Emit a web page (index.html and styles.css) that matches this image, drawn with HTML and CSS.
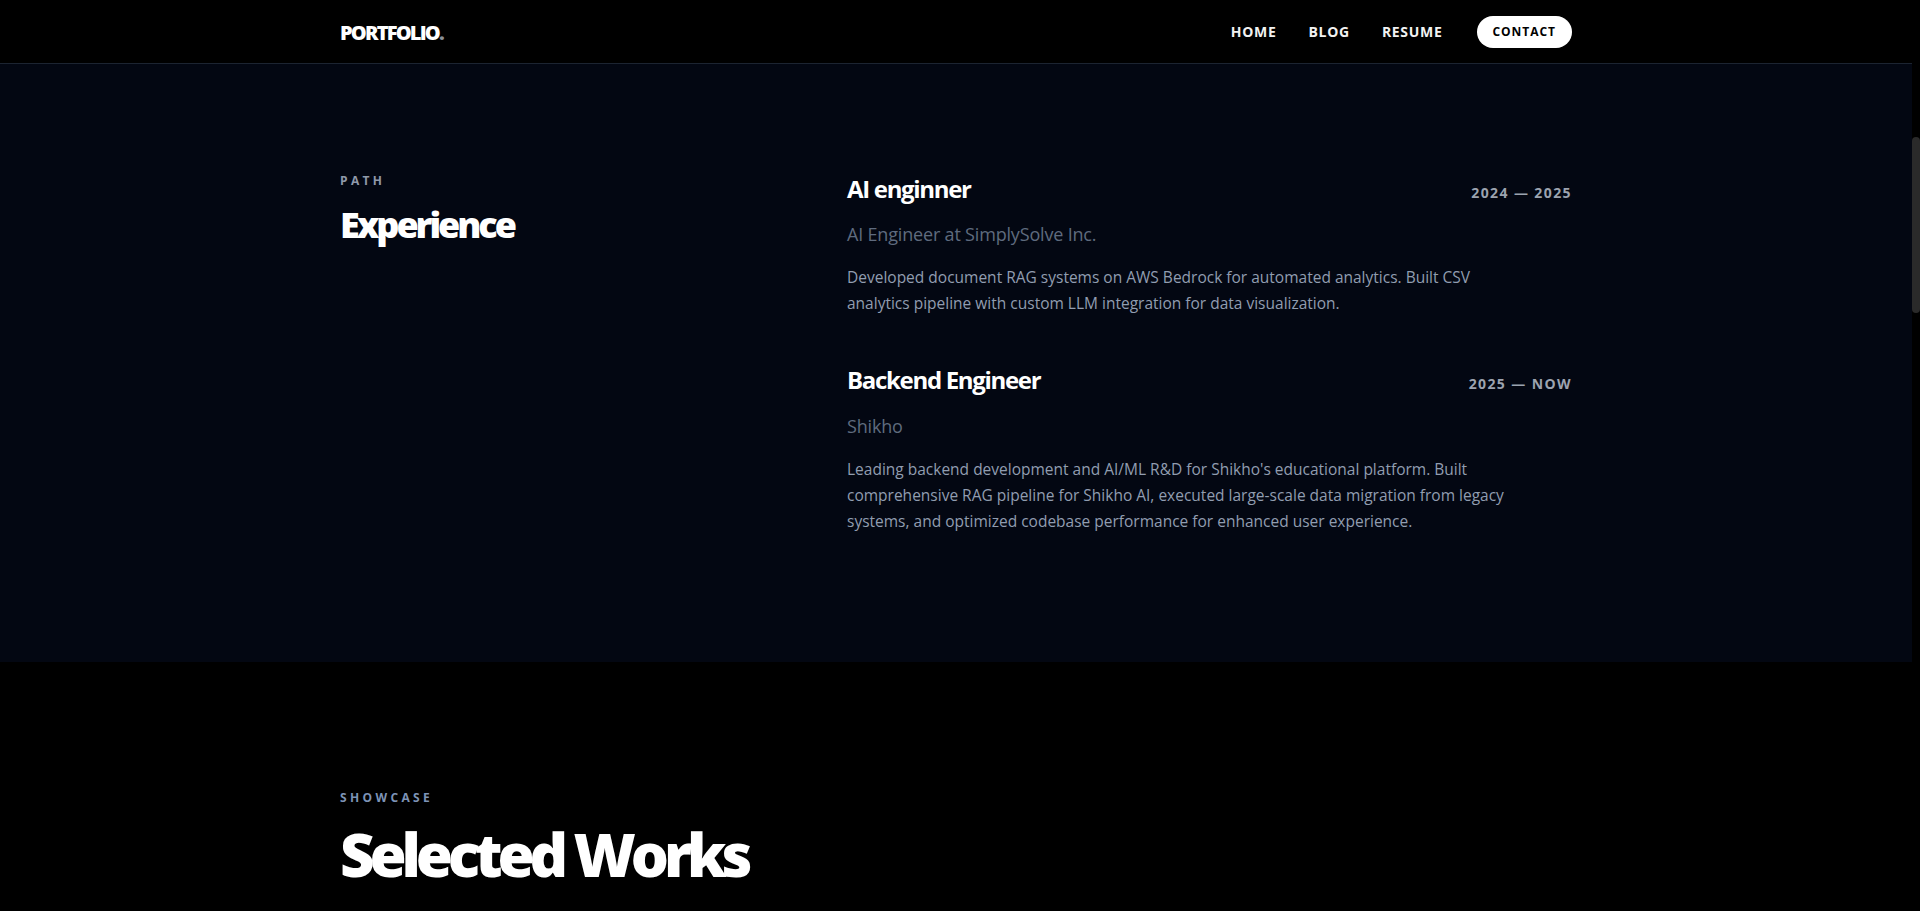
FILE: index.html
```html
<!DOCTYPE html>
<html lang="en">
<head>
<meta charset="utf-8">
<title>Portfolio</title>
<link rel="stylesheet" href="styles.css">
</head>
<body>
<header class="site-header">
  <div class="container header-inner">
    <a class="logo" href="#">PORTFOLIO<span class="logo-dot">.</span></a>
    <nav class="nav">
      <a class="nav-link" href="#">HOME</a>
      <a class="nav-link" href="#">BLOG</a>
      <a class="nav-link" href="#">RESUME</a>
      <a class="nav-cta" href="#">CONTACT</a>
    </nav>
  </div>
</header>
<main>
  <section class="experience">
    <div class="container exp-grid">
      <div class="exp-heading">
        <p class="eyebrow">PATH</p>
        <h2 class="section-title">Experience</h2>
      </div>
      <div class="exp-list">
        <article class="job">
          <div class="job-head">
            <h3 class="job-title">AI enginner</h3>
            <span class="job-date">2024 — 2025</span>
          </div>
          <p class="job-company">AI Engineer at SimplySolve Inc.</p>
          <p class="job-desc">Developed document RAG systems on AWS Bedrock for automated analytics. Built CSV analytics pipeline with custom LLM integration for data visualization.</p>
        </article>
        <article class="job">
          <div class="job-head">
            <h3 class="job-title">Backend Engineer</h3>
            <span class="job-date">2025 — NOW</span>
          </div>
          <p class="job-company">Shikho</p>
          <p class="job-desc">Leading backend development and AI/ML R&amp;D for Shikho's educational platform. Built comprehensive RAG pipeline for Shikho AI, executed large-scale data migration from legacy systems, and optimized codebase performance for enhanced user experience.</p>
        </article>
      </div>
    </div>
  </section>
  <section class="works">
    <div class="container">
      <p class="eyebrow eyebrow-blue">SHOWCASE</p>
      <h2 class="works-title">Selected Works</h2>
    </div>
  </section>
</main>
<div class="scroll-thumb" aria-hidden="true"></div>
</body>
</html>
```
FILE: styles.css
```css
* { box-sizing: border-box; }

html { background: #000; }

html::-webkit-scrollbar { width: 8px; }
html::-webkit-scrollbar-track { background: #000; }
html::-webkit-scrollbar-thumb { background: #2b2b2b; border-radius: 4px; }

body {
  margin: 0;
  padding-right: 8px;
  background: #000;
  color: #fff;
  font-family: "Open Sans", "Noto Sans", sans-serif;
}

a { color: inherit; text-decoration: none; }
p, h2, h3 { margin: 0; }

.container {
  max-width: 1280px;
  margin: 0 auto;
  padding: 0 24px;
}

/* scrollbar thumb drawn over the right edge */
.scroll-thumb {
  position: fixed;
  top: 137px;
  right: 0;
  width: 8px;
  height: 176px;
  border-radius: 4px;
  background: #2a2a2a;
  z-index: 20;
}

/* header */
.site-header {
  position: sticky;
  top: 0;
  z-index: 10;
  background: #000;
  border-bottom: 1px solid #1c2431;
}
.header-inner {
  height: 63px;
  display: flex;
  align-items: center;
  justify-content: space-between;
}
.logo {
  font-size: 20px;
  font-weight: 800;
  letter-spacing: -0.09em;
  line-height: 28px;
  color: #fff;
  margin-top: 2px;
}
.logo-dot { color: #8b8f98; }

.nav {
  display: flex;
  align-items: center;
  gap: 32px;
}
.nav-link {
  font-size: 14px;
  font-weight: 700;
  letter-spacing: 0.05em;
  line-height: 20px;
  color: #f2f2f2;
}
.nav-cta {
  background: #fff;
  color: #000;
  border-radius: 9999px;
  padding: 8px 16px;
  font-size: 12px;
  font-weight: 700;
  letter-spacing: 0.08em;
  line-height: 16px;
  margin-left: 2px;
}

/* experience */
.experience {
  background: #030712;
  padding: 109px 0 128px;
}
.exp-grid {
  display: grid;
  grid-template-columns: 443px 1fr;
  column-gap: 64px;
}
.exp-list { margin-top: -2px; }
.eyebrow {
  font-size: 12px;
  font-weight: 700;
  letter-spacing: 0.28em;
  line-height: 16px;
  color: #8f99aa;
}
.eyebrow-blue { color: #7d93b6; }

.section-title {
  margin-top: 16px;
  font-size: 36px;
  font-weight: 800;
  line-height: 40px;
  letter-spacing: -0.085em;
  color: #fff;
}

.job + .job { margin-top: 46px; }
.job-head {
  display: flex;
  justify-content: space-between;
  align-items: baseline;
}
.job-title {
  font-size: 24px;
  font-weight: 700;
  line-height: 36px;
  letter-spacing: -0.055em;
  color: #fff;
}
.job-date {
  font-size: 14px;
  font-weight: 700;
  letter-spacing: 0.1em;
  color: #9ca3af;
}
.job-company {
  margin-top: 13px;
  font-size: 18px;
  line-height: 28px;
  color: #5f6b7e;
  letter-spacing: -0.01em;
}
.job + .job .job-company { margin-top: 14px; }
.job-desc {
  margin-top: 16px;
  max-width: 672px;
  font-size: 15.5px;
  line-height: 26px;
  color: #919db0;
}

/* works */
.works {
  background: #000;
  padding: 128px 0 400px;
}
.works-title {
  margin-top: 18px;
  font-size: 60px;
  font-weight: 800;
  line-height: 60px;
  letter-spacing: -0.085em;
  color: #fff;
}
```
